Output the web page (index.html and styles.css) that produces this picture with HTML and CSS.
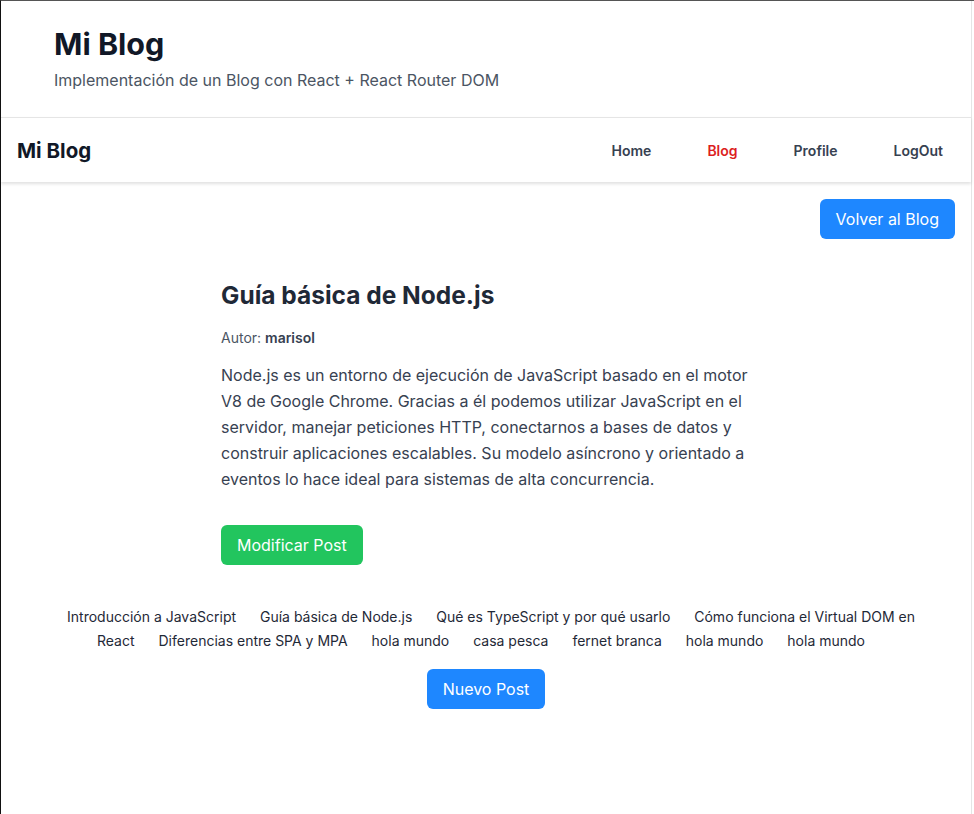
FILE: index.html
```html
<!DOCTYPE html>
<html lang="es">
<head>
<meta charset="utf-8">
<title>Mi Blog</title>
<link rel="stylesheet" href="styles.css">
</head>
<body>
<div class="app">
  <header class="site-header">
    <h1 class="site-title">Mi Blog</h1>
    <p class="site-subtitle">Implementación de un Blog con React + React Router DOM</p>
  </header>
  <nav class="navbar">
    <a class="brand" href="#">Mi Blog</a>
    <ul class="nav-links">
      <li><a href="#">Home</a></li>
      <li><a class="active" href="#">Blog</a></li>
      <li><a href="#">Profile</a></li>
      <li><a href="#">LogOut</a></li>
    </ul>
  </nav>
  <main class="main">
    <div class="top-actions">
      <button class="btn btn-blue">Volver al Blog</button>
    </div>
    <article class="post">
      <h2 class="post-title">Guía básica de Node.js</h2>
      <p class="post-author">Autor: <strong>marisol</strong></p>
      <p class="post-body">Node.js es un entorno de ejecución de JavaScript basado en el motor V8 de Google Chrome. Gracias a él podemos utilizar JavaScript en el servidor, manejar peticiones HTTP, conectarnos a bases de datos y construir aplicaciones escalables. Su modelo asíncrono y orientado a eventos lo hace ideal para sistemas de alta concurrencia.</p>
      <button class="btn btn-green">Modificar Post</button>
    </article>
    <div class="post-list">
      <a href="#">Introducción a JavaScript</a> <a href="#">Guía básica de Node.js</a> <a href="#">Qué es TypeScript y por qué usarlo</a> <a href="#">Cómo funciona el Virtual DOM en React</a> <a href="#">Diferencias entre SPA y MPA</a> <a href="#">hola mundo</a> <a href="#">casa pesca</a> <a href="#">fernet branca</a> <a href="#">hola mundo</a> <a href="#">hola mundo</a>
    </div>
    <div class="bottom-actions">
      <button class="btn btn-blue">Nuevo Post</button>
    </div>
  </main>
</div>
</body>
</html>
```

FILE: styles.css
```css
* { box-sizing: border-box; }
html, body { height: 100%; }
body {
  margin: 0;
  font-family: Inter, "Noto Sans", sans-serif;
  color: #1f2937;
  background: #fff;
  border-top: 1px solid #555;
  border-left: 1px solid #111;
}
.app {
  min-height: 100%;
  margin-right: 2px;
  border-right: 1px solid #e5e5e5;
}
.site-header {
  padding: 25px 53px 27px;
}
.site-title {
  margin: 0;
  font-size: 30.5px;
  font-weight: 700;
  color: #111827;
  line-height: 36px;
}
.site-subtitle {
  margin: 8px 0 0;
  font-size: 16px;
  color: #4b5563;
  line-height: 20px;
}
.navbar {
  display: flex;
  align-items: center;
  justify-content: space-between;
  height: 65px;
  padding: 0 16px;
  border-top: 1px solid #e5e5e5;
  box-shadow: 0 2px 3px rgba(0,0,0,0.12);
}
.brand {
  font-size: 20.5px;
  font-weight: 700;
  color: #111827;
  text-decoration: none;
}
.nav-links {
  display: flex;
  list-style: none;
  margin: 0;
  padding: 0;
}
.nav-links a {
  display: block;
  padding: 8px 28px;
  font-size: 14px;
  font-weight: 600;
  color: #374151;
  text-decoration: none;
}
.nav-links li:last-child a { padding-right: 12px; }
.nav-links a.active { color: #dc1f1f; }
.main { padding: 17px 16px 40px; }
.top-actions {
  display: flex;
  justify-content: flex-end;
}
.btn {
  border: none;
  border-radius: 6px;
  height: 40px;
  padding: 0 16px;
  font-family: inherit;
  font-size: 16px;
  color: #fff;
  cursor: pointer;
}
.btn-blue { background: #1e87ff; }
.btn-green { background: #22c55e; }
.post {
  width: 530px;
  margin: 40px auto 0;
}
.post-title {
  margin: 0;
  font-size: 24.5px;
  font-weight: 700;
  color: #1f2937;
  line-height: 32px;
}
.post-author {
  margin: 18px 0 0;
  font-size: 14px;
  color: #4b5563;
}
.post-author strong { font-weight: 600; color: #374151; }
.post-body {
  margin: 16px 0 33px;
  font-size: 16px;
  line-height: 26px;
  color: #374151;
}
.post-list {
  max-width: 900px;
  margin: 40px auto 0;
  text-align: center;
  font-size: 14px;
  line-height: 24px;
}
.post-list a {
  margin: 0 10px;
  color: #1f2937;
  text-decoration: none;
}
.bottom-actions {
  display: flex;
  justify-content: center;
  margin-top: 16px;
}
```
